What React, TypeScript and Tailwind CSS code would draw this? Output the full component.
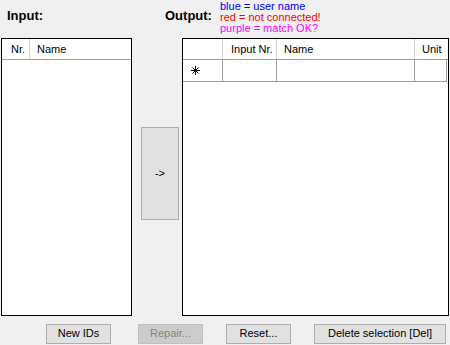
import React from 'react';

const Asterisk = () => (
  <svg width="9" height="9" viewBox="0 0 9 9" className="block">
    <g stroke="#000" strokeWidth="1" shapeRendering="crispEdges">
      <line x1="4.5" y1="0" x2="4.5" y2="9" />
      <line x1="0" y1="4.5" x2="9" y2="4.5" />
    </g>
    <g stroke="#000" strokeWidth="1">
      <line x1="1.5" y1="1.5" x2="7.5" y2="7.5" />
      <line x1="7.5" y1="1.5" x2="1.5" y2="7.5" />
    </g>
  </svg>
);

const Button: React.FC<{ label: string; width: string; disabled?: boolean }> = ({ label, width, disabled }) => (
  <button
    className={
      disabled
        ? `${width} h-[20px] border border-[#bfbfbf] bg-[#cccccc] text-[#838383] text-[11px] leading-none`
        : `${width} h-[20px] border border-[#adadad] bg-[#e1e1e1] text-black text-[11px] leading-none`
    }
  >
    {label}
  </button>
);

export default function App() {
  return (
    <div
      className="w-[450px] h-[345px] bg-[#f0f0f0] overflow-hidden text-black"
      style={{ fontFamily: '"Liberation Sans", Arial, sans-serif' }}
    >
      {/* Labels */}
      <div className="flex h-[38px]">
        <div className="w-[165px] pl-[7px] pt-[6px] text-[13px] font-bold">Input:</div>
        <div className="w-[55px] pt-[6px] text-[13px] font-bold">Output:</div>
        <div className="pt-[1px] text-[11px] leading-[11px]">
          <div className="text-[#0000ff]">blue = user name</div>
          <div className="text-[#ff0000]">red = not connected!</div>
          <div className="text-[#ff00ff]">purple = match OK?</div>
        </div>
      </div>

      {/* Grids */}
      <div className="flex h-[278px]">
        <div className="ml-[1px] w-[131px] h-full border border-black bg-white">
          <div className="flex h-[21px] border-b border-[#a0a0a0] text-[11px]">
            <div className="w-[28px] pl-[9px] flex items-center border-r border-[#d0d0d0]">Nr.</div>
            <div className="pl-[7px] flex items-center">Name</div>
          </div>
        </div>

        <div className="w-[50px] flex flex-col items-start pt-[89px] pl-[9px]">
          <button className="w-[38px] h-[93px] border border-[#adadad] bg-[#e1e1e1] text-[11px]">-&gt;</button>
        </div>

        <div className="w-[267px] h-full border border-black bg-white text-[11px]">
          <div className="flex h-[21px] border-b border-[#a0a0a0]">
            <div className="w-[40px] border-r border-[#d0d0d0]" />
            <div className="w-[54px] pl-[8px] flex items-center border-r border-[#d0d0d0]">Input Nr.</div>
            <div className="w-[138px] pl-[7px] flex items-center border-r border-[#d0d0d0]">Name</div>
            <div className="flex-1 pl-[7px] flex items-center">Unit</div>
          </div>
          <div className="flex h-[22px]">
            <div className="w-[40px] flex items-center pl-[8px] border-r border-b border-[#a0a0a0]">
              <Asterisk />
            </div>
            <div className="w-[54px] border-r border-b border-[#a0a0a0]" />
            <div className="w-[138px] border-r border-b border-[#a0a0a0]" />
            <div className="w-[32px] border-r border-b border-[#a0a0a0]" />
          </div>
        </div>
      </div>

      {/* Buttons */}
      <div className="flex pt-[4px]">
        <div className="ml-[46px]">
          <Button label="New IDs" width="w-[65px]" />
        </div>
        <div className="ml-[27px]">
          <Button label="Repair..." width="w-[65px]" disabled />
        </div>
        <div className="ml-[23px]">
          <Button label="Reset..." width="w-[65px]" />
        </div>
        <div className="ml-[23px]">
          <Button label="Delete selection [Del]" width="w-[132px]" />
        </div>
      </div>
    </div>
  );
}
